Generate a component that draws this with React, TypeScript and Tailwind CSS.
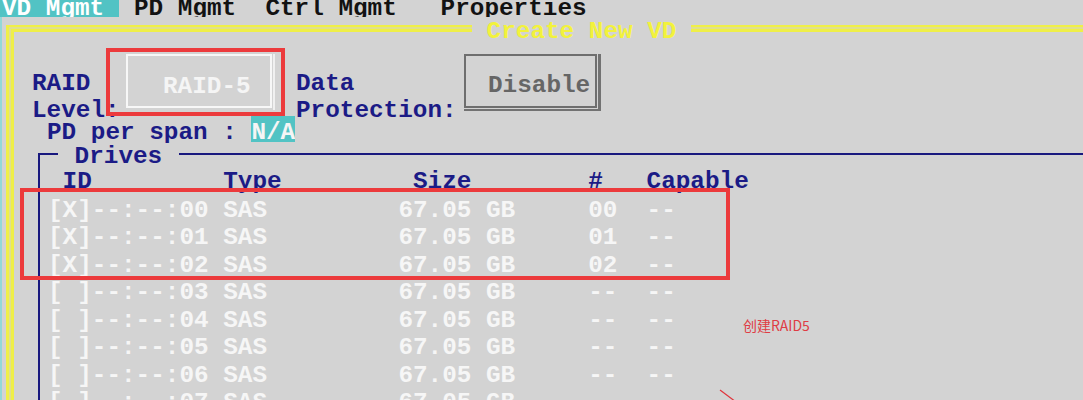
import React from "react";

const mono = "font-['Liberation_Mono','DejaVu_Sans_Mono',monospace] font-bold text-[24.33px]";

const pad = (s: string, n: number) => s.padEnd(n, " ");

const header = pad(" ID", 12) + pad("Type", 13) + pad("Size", 12) + pad("#", 4) + "Capable";

const rows = [0, 1, 2, 3, 4, 5, 6, 7].map((i) => {
  const id = String(i).padStart(2, "0");
  const sel = i < 3;
  return (
    pad(`[${sel ? "X" : " "}]--:--:${id}`, 12) +
    pad("SAS", 12) +
    pad("67.05 GB", 13) +
    pad(sel ? id : "--", 4) +
    "--"
  );
});

export default function App() {
  return (
    <div className={`relative w-[1083px] h-[400px] overflow-hidden bg-[#d3d3d3] ${mono} whitespace-pre`}>
      {/* menu bar */}
      <div className="flex h-[17px] overflow-hidden leading-[27.5px] text-[#121212]">
        <div className="w-[119px] h-[17px] bg-[#52c3c4] text-white pl-[2px] overflow-hidden">
          <div className="-mt-[5px]">VD Mgmt</div>
        </div>
        <div className="-mt-[5px] ml-[15px]">PD Mgmt  Ctrl Mgmt   Properties</div>
      </div>

      {/* frame */}
      <div className="h-[383px] border-l-2 border-[#93d8d8] pl-[4px] pt-[8px]">
        <div className="h-full border-l-[3px] border-t-2 border-[#efef48] bg-[#e0e08e] pl-[2px] pt-[2px]">
          <div className="relative h-full border-l-[3px] border-t-[3px] border-[#efef48] bg-[#d3d3d3]">
            {/* title */}
            <div className="absolute left-[458px] -top-[14px] bg-[#d3d3d3] leading-[27.5px] text-[#f2f23c]">
              {" Create New VD "}
            </div>

            {/* RAID level / data protection row */}
            <div className="flex items-start h-[64px] mt-[22px] leading-[27px]">
              <div className="ml-[18px] w-[94px] pt-[15.5px] text-[#1b1b86]">{"RAID\nLevel:"}</div>
              <div className="flex h-[56px]">
                <div className="w-[146px] h-[54px] border-2 border-[#f7f7f7] pl-[35px] pt-[16.5px] leading-[27.5px] text-[#f5f5f5]">
                  RAID-5
                </div>
                <div className="w-[2px] h-[56px] ml-[1px] bg-[#f0f0f0]" />
              </div>
              <div className="ml-[21px] w-[168px] pt-[15.5px] text-[#1b1b86]">{"Data\nProtection:"}</div>
              <div className="border-r-[3px] border-b-2 border-[#727272] pr-[1px] pb-[1px]">
                <div className="w-[133px] h-[54px] border-2 border-[#6e6e6e] pl-[22px] pt-[15.5px] leading-[27.5px] text-[#666666]">
                  Disable
                </div>
              </div>
            </div>

            {/* PD per span */}
            <div className="flex items-start h-[35px] ml-[33px] leading-[27.5px]">
              <div className="mt-[0.5px] text-[#1b1b86]">PD per span : </div>
              <div className="-mt-[2px] h-[26px] w-[44px] overflow-hidden bg-[#52c3c4] text-[#f5f5f5]">
                <div className="mt-[2.5px]">N/A</div>
              </div>
            </div>

            {/* Drives group */}
            <div className="relative ml-[24px] h-[300px] border-l-2 border-t-2 border-[#18187e] pl-[8px] pt-[12.5px] leading-[27.5px]">
              <div className="absolute left-[18px] -top-[12.5px] bg-[#d3d3d3] px-[2px] text-[#1b1b86]">{" Drives "}</div>
              <div className="h-[29px] text-[#1b1b86]">{header}</div>
              {rows.map((r, i) => (
                <div key={i} className="text-[#f6f6f6]">
                  {r}
                </div>
              ))}
            </div>
          </div>
        </div>
      </div>

      {/* annotations */}
      <div className="absolute left-[106px] top-[48px] w-[179px] h-[68px] border-4 border-[#ec3a3c]" />
      <div className="absolute left-[20px] top-[188px] w-[710px] h-[92px] border-4 border-[#ec3a3c]" />
      <div className="absolute left-[743px] top-[315px] font-['Noto_Sans_CJK_SC','Noto_Sans',sans-serif] font-normal text-[14px] leading-[20px] text-[#df3c44]">
        创建RAID5
      </div>
      <svg className="absolute left-[718px] top-[388px]" width="20" height="14" viewBox="0 0 20 14">
        <line x1="2" y1="2" x2="18" y2="14" stroke="#e0343c" strokeWidth="1.2" />
      </svg>
    </div>
  );
}
